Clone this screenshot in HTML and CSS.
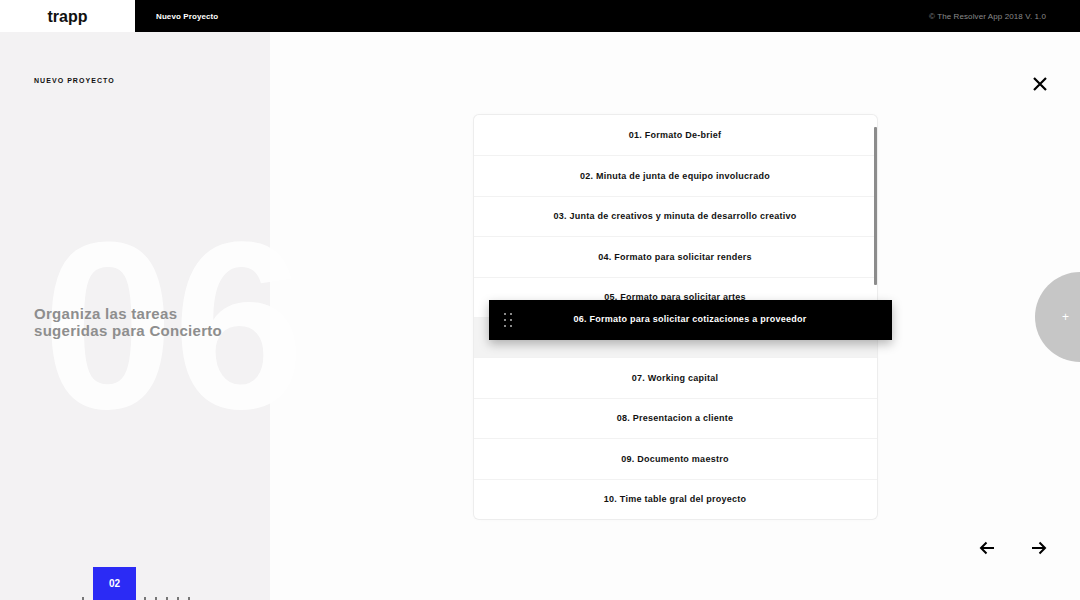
FILE: index.html
```html
<!DOCTYPE html>
<html lang="es">
<head>
<meta charset="utf-8">
<title>trapp - Nuevo Proyecto</title>
<link rel="stylesheet" href="styles.css">
</head>
<body>
<header class="topbar">
  <div class="logo">trapp</div>
  <div class="bar">
    <span class="bar-title">Nuevo Proyecto</span>
    <span class="copy">© The Resolver App 2018 V. 1.0</span>
  </div>
</header>
<div class="layout">
  <aside class="sidebar">
    <div class="label">NUEVO PROYECTO</div>
    <div class="bignum" aria-hidden="true">06</div>
    <h1 class="title">Organiza las tareas<br>sugeridas para Concierto</h1>
    <div class="pager">
      <span class="tick"></span>
      <span class="page-current">02</span>
      <span class="tick"></span>
      <span class="tick"></span>
      <span class="tick"></span>
      <span class="tick"></span>
      <span class="tick"></span>
    </div>
  </aside>
  <main class="main">
    <button class="close" aria-label="Cerrar">
      <svg width="14" height="14" viewBox="0 0 14 14"><path d="M1 1L13 13M13 1L1 13" stroke="#000" stroke-width="2.2" fill="none"/></svg>
    </button>
    <div class="list-wrap">
      <ul class="list">
        <li class="row"><span>01. Formato De-brief</span></li>
        <li class="row"><span>02. Minuta de junta de equipo involucrado</span></li>
        <li class="row"><span>03. Junta de creativos y minuta de desarrollo creativo</span></li>
        <li class="row"><span>04. Formato para solicitar renders</span></li>
        <li class="row"><span>05. Formato para solicitar artes</span></li>
        <li class="row row-placeholder"></li>
        <li class="row"><span>07. Working capital</span></li>
        <li class="row"><span>08. Presentacion a cliente</span></li>
        <li class="row"><span>09. Documento maestro</span></li>
        <li class="row"><span>10. Time table gral del proyecto</span></li>
      </ul>
      <div class="scrollbar"></div>
      <div class="dragging">
        <span class="handle">
          <i></i><i></i><i></i><i></i><i></i><i></i>
        </span>
        <span class="drag-text">06. Formato para solicitar cotizaciones a proveedor</span>
      </div>
    </div>
    <button class="fab" aria-label="Agregar">+</button>
    <nav class="arrows">
      <button class="arrow" aria-label="Anterior">
        <svg width="16" height="14" viewBox="0 0 16 14"><path d="M15 7H2M7.5 1.5L2 7l5.5 5.5" stroke="#000" stroke-width="2" fill="none"/></svg>
      </button>
      <button class="arrow" aria-label="Siguiente">
        <svg width="16" height="14" viewBox="0 0 16 14"><path d="M1 7h13M8.5 1.5L14 7l-5.5 5.5" stroke="#000" stroke-width="2" fill="none"/></svg>
      </button>
    </nav>
  </main>
</div>
</body>
</html>
```

FILE: styles.css
```css
* { box-sizing: border-box; }
html, body { margin: 0; padding: 0; }
body {
  width: 1080px;
  height: 600px;
  overflow: hidden;
  font-family: "Liberation Sans", Arial, Helvetica, sans-serif;
  background: #fdfdfd;
  color: #111;
}
.topbar {
  display: flex;
  height: 32px;
}
.logo {
  width: 135px;
  background: #fff;
  display: flex;
  align-items: center;
  justify-content: center;
  font-size: 16px;
  font-weight: 700;
  color: #111;
  padding-top: 1px;
}
.bar {
  flex: 1;
  background: #000;
  display: flex;
  align-items: center;
  justify-content: space-between;
  padding: 0 34px 0 21px;
}
.bar-title {
  color: #fff;
  font-size: 8px;
  font-weight: 700;
  letter-spacing: 0.1px;
}
.copy {
  color: #8a8a8a;
  font-size: 8px;
  letter-spacing: 0.1px;
}
.layout {
  display: flex;
  height: 568px;
  position: relative;
}
.sidebar {
  width: 270px;
  background: #f3f2f3;
  display: flex;
  flex-direction: column;
  padding: 45px 0 0 34px;
}
.label {
  font-size: 7px;
  font-weight: 700;
  letter-spacing: 1.05px;
  color: #111;
  line-height: 8px;
}
.bignum {
  position: absolute;
  left: 42px;
  top: 175px;
  font-size: 237px;
  font-weight: 700;
  line-height: 1;
  color: #fff;
  opacity: 0.85;
  z-index: 0;
  pointer-events: none;
  letter-spacing: -1px;
}
.title {
  position: relative;
  z-index: 1;
  margin: 220px 0 0 0;
  font-size: 15px;
  line-height: 17px;
  font-weight: 700;
  color: #8e8e8e;
  letter-spacing: 0.3px;
}
.pager {
  margin-top: auto;
  display: flex;
  align-items: flex-end;
  gap: 8px;
  padding-left: 48px;
  position: relative;
  z-index: 1;
}
.tick {
  width: 2px;
  height: 3px;
  background: #777;
  margin-right: 1px;
}
.page-current {
  width: 43px;
  height: 33px;
  background: #2b2bf5;
  color: #fff;
  font-size: 10px;
  font-weight: 700;
  display: flex;
  align-items: center;
  justify-content: center;
}
.main {
  flex: 1;
  position: relative;
  display: flex;
  flex-direction: column;
  align-items: center;
  padding-top: 83px;
}
.close {
  position: absolute;
  top: 45px;
  right: 33px;
  border: 0;
  background: none;
  padding: 0;
  width: 14px;
  height: 14px;
  display: flex;
}
.list-wrap {
  position: relative;
  width: 403px;
}
.list {
  list-style: none;
  margin: 0;
  padding: 0;
  background: #fff;
  border-radius: 5px;
  box-shadow: 0 0 0 1px #ededed, 0 0 4px rgba(0,0,0,0.03);
}
.row {
  height: 40.4px;
  display: flex;
  align-items: center;
  justify-content: center;
  font-size: 9px;
  font-weight: 700;
  color: #111;
  border-top: 1px solid #f2f2f2;
  letter-spacing: 0.25px;
  padding-bottom: 0;
}
.row:first-child { border-top: 0; }
.row-placeholder {
  background: #f3f3f3;
}
.scrollbar {
  position: absolute;
  right: 0;
  top: 12px;
  width: 3px;
  height: 158px;
  background: #8c8c8c;
  border-radius: 1px;
}
.dragging {
  position: absolute;
  left: 15px;
  top: 185px;
  width: 403px;
  height: 40px;
  background: #000;
  color: #fff;
  display: flex;
  align-items: center;
  justify-content: center;
  box-shadow: 0 4px 10px rgba(0,0,0,0.28);
  font-size: 9px;
  font-weight: 700;
  letter-spacing: 0.25px;
  padding-bottom: 2px;
  z-index: 2;
}
.handle {
  position: absolute;
  left: 15px;
  top: 13px;
  display: grid;
  grid-template-columns: 2px 2px;
  column-gap: 4px;
  row-gap: 4px;
}
.handle i {
  width: 2px;
  height: 2px;
  background: #8a8a8a;
  display: block;
}
.fab {
  position: absolute;
  right: -45px;
  top: 240px;
  width: 90px;
  height: 90px;
  border-radius: 50%;
  border: 0;
  background: #c6c6c6;
  color: #fff;
  font-size: 12px;
  font-family: "Liberation Sans", Arial, sans-serif;
  display: flex;
  align-items: center;
  justify-content: flex-start;
  padding: 0 0 0 27px;
}
.arrows {
  position: absolute;
  right: 33px;
  bottom: 45px;
  display: flex;
  gap: 36px;
}
.arrow {
  border: 0;
  background: none;
  padding: 0;
  width: 16px;
  height: 14px;
  display: flex;
}
```
